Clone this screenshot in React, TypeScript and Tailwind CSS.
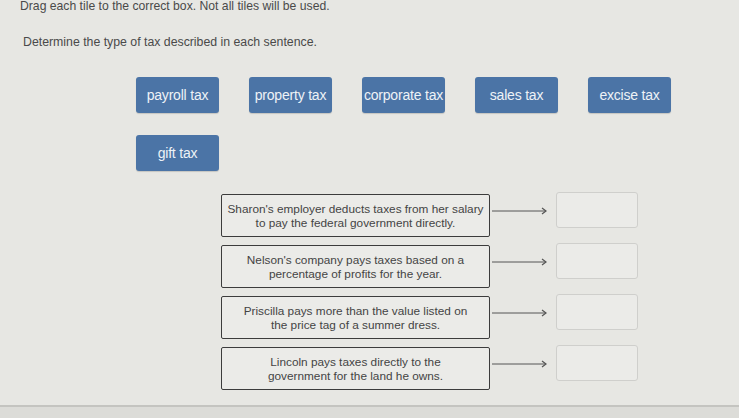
const tiles = [
  "payroll tax",
  "property tax",
  "corporate tax",
  "sales tax",
  "excise tax",
  "gift tax",
];

const sentences = [
  ["Sharon's employer deducts taxes from her salary", "to pay the federal government directly."],
  ["Nelson's company pays taxes based on a", "percentage of profits for the year."],
  ["Priscilla pays more than the value listed on", "the price tag of a summer dress."],
  ["Lincoln pays taxes directly to the", "government for the land he owns."],
];

function Arrow() {
  return (
    <svg width="60" height="10" viewBox="0 0 60 10" className="mt-[12px] shrink-0">
      <line x1="2" y1="5" x2="56" y2="5" stroke="#555" strokeWidth="1" />
      <polyline points="52,2 56,5 52,8" fill="none" stroke="#555" strokeWidth="1.2" />
    </svg>
  );
}

export default function App() {
  return (
    <div
      className="relative h-[418px] w-[739px] overflow-hidden bg-[#e7e7e3] text-[#4a4a4a]"
      style={{ fontFamily: '"Liberation Sans", Arial, sans-serif' }}
    >
      <div className="flex h-[405px] flex-col">
        <p className="mt-[-1px] pl-[20px] text-[12.2px] leading-[14px]">
          Drag each tile to the correct box. Not all tiles will be used.
        </p>
        <p className="mt-[22px] pl-[23px] text-[12.3px] leading-[14px]">
          Determine the type of tax described in each sentence.
        </p>

        {/* tile bank */}
        <div className="ml-[136px] mt-[28px] grid w-[535px] grid-cols-[repeat(5,83px)] gap-x-[30px] gap-y-[22px]">
          {tiles.map((t) => (
            <div
              key={t}
              className="flex h-[36px] items-center justify-center rounded-[3px] bg-[#4b74a6] text-[14px] tracking-[-0.2px] text-[#eef2f6] shadow-[0_1px_1px_rgba(0,0,0,0.15)]"
            >
              {t}
            </div>
          ))}
        </div>

        {/* sentence rows with drop targets */}
        <div className="ml-[221px] mt-[23px] flex flex-col gap-[8px]">
          {sentences.map(([a, b]) => (
            <div key={a} className="flex items-start">
              <div className="flex h-[43px] w-[269px] flex-col items-center justify-center rounded-[2px] border-[1.5px] border-[#3c3c3c] bg-[#ebebe8] text-[11.8px] leading-[14px] text-[#444]">
                <span>{a}</span>
                <span>{b}</span>
              </div>
              <Arrow />
              <div className="ml-[6px] mt-[-2px] h-[36px] w-[82px] rounded-[3px] border border-[#cfcfcc] bg-[#ebebe8]" />
            </div>
          ))}
        </div>
      </div>
      <div className="h-[13px] border-t-2 border-[#c4c4c0] bg-[#dcdcd8]" />
    </div>
  );
}
